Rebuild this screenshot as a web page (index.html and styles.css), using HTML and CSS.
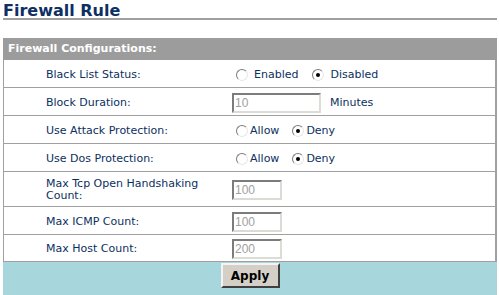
FILE: index.html
```html
<!DOCTYPE html>
<html>
    <head>
        <title>Firewall Rule</title>
        <link rel="stylesheet" href="styles.css">
    </head>
    <body>
        <h1 class="title">Firewall Rule</h1>
        <div class="panel">
            <div class="panel-head">Firewall Configurations:</div>
            <div class="row">
                <label class="name">Black List Status:</label>
                <div class="value">
                    <span class="opt"><input type="radio" name="bl"><span>Enabled</span></span>
                    <span class="opt"><input type="radio" name="bl" checked><span>Disabled</span></span>
                </div>
            </div>
            <div class="row">
                <label class="name">Block Duration:</label>
                <div class="value">
                    <input class="field wide" type="text" value="10">
                    <span class="unit">Minutes</span>
                </div>
            </div>
            <div class="row">
                <label class="name">Use Attack Protection:</label>
                <div class="value tight">
                    <span class="opt"><input type="radio" name="ap"><span>Allow</span></span>
                    <span class="opt"><input type="radio" name="ap" checked><span>Deny</span></span>
                </div>
            </div>
            <div class="row">
                <label class="name">Use Dos Protection:</label>
                <div class="value tight">
                    <span class="opt"><input type="radio" name="dp"><span>Allow</span></span>
                    <span class="opt"><input type="radio" name="dp" checked><span>Deny</span></span>
                </div>
            </div>
            <div class="row tall">
                <label class="name">Max Tcp Open Handshaking<br>Count:</label>
                <div class="value"><input class="field" type="text" value="100"></div>
            </div>
            <div class="row">
                <label class="name">Max ICMP Count:</label>
                <div class="value"><input class="field" type="text" value="100"></div>
            </div>
            <div class="row last">
                <label class="name">Max Host Count:</label>
                <div class="value"><input class="field" type="text" value="200"></div>
            </div>
            <div class="actions">
                <button class="apply" type="button">Apply</button>
            </div>
        </div>
    </body>
</html>
```

FILE: styles.css
```css
*{
    margin: 0;
    box-sizing: border-box;
}
body{
    padding: 2px 2px 0 3px;
    font-family: "DejaVu Sans", Verdana, sans-serif;
    font-size: 11px;
    color: #0b2f5e;
    background: white;
}
.title{
    font-size: 16px;
    font-weight: bold;
    color: #0d2f63;
    line-height: 17px;
    height: 18px;
    border-bottom: 2px solid #a0a0a0;
}
.panel{
    margin-top: 18px;
}
.panel-head{
    height: 22px;
    line-height: 22px;
    padding-left: 5px;
    background-color: #9c9c9c;
    color: white;
    font-weight: bold;
}
.row{
    display: grid;
    grid-template-columns: 228px 1fr;
    align-items: center;
    height: 28px;
    padding-top: 2px;
    border-left: 1px solid #a0a0a0;
    border-right: 2px solid #a0a0a0;
    border-bottom: 1px solid #a0a0a0;
}
.row.tall{
    height: 35px;
}
.row.last{
    height: 27px;
}
.name{
    padding-left: 42px;
    line-height: 12px;
}
.value{
    display: flex;
    align-items: center;
    gap: 10px;
}
.value.tight{
    gap: 9px;
}
.opt{
    display: flex;
    align-items: center;
    gap: 6px;
}
.value.tight .opt{
    gap: 2px;
}
.opt input{
    appearance: none;
    width: 12px;
    height: 12px;
    margin: 0 0 0 4px;
    border-radius: 50%;
    border: 1px solid;
    border-color: #7a7a7a #e8e8e8 #e8e8e8 #7a7a7a;
    background: white;
    display: grid;
    place-items: center;
}
.opt input:checked::after{
    content: "";
    width: 4px;
    height: 4px;
    border-radius: 50%;
    background: black;
}
.field{
    width: 50px;
    height: 20px;
    padding: 0 1px;
    font-family: "Liberation Sans", Arial, sans-serif;
    font-size: 12px;
    color: #a0a0a0;
    border: 2px solid;
    border-color: #7c7c7c #dcdcd6 #dcdcd6 #7c7c7c;
    background: white;
}
.field.wide{
    width: 89px;
}
.unit{
    margin-left: -1px;
}
.actions{
    display: flex;
    justify-content: center;
    height: 33px;
    padding-top: 1px;
    background-color: #a7d6dc;
}
.apply{
    width: 59px;
    height: 25px;
    font-family: "DejaVu Sans", Verdana, sans-serif;
    font-size: 12px;
    font-weight: bold;
    color: black;
    background: #d4d0c8;
    border: 2px solid;
    border-color: #f4f4f4 #404040 #404040 #f4f4f4;
}
```
